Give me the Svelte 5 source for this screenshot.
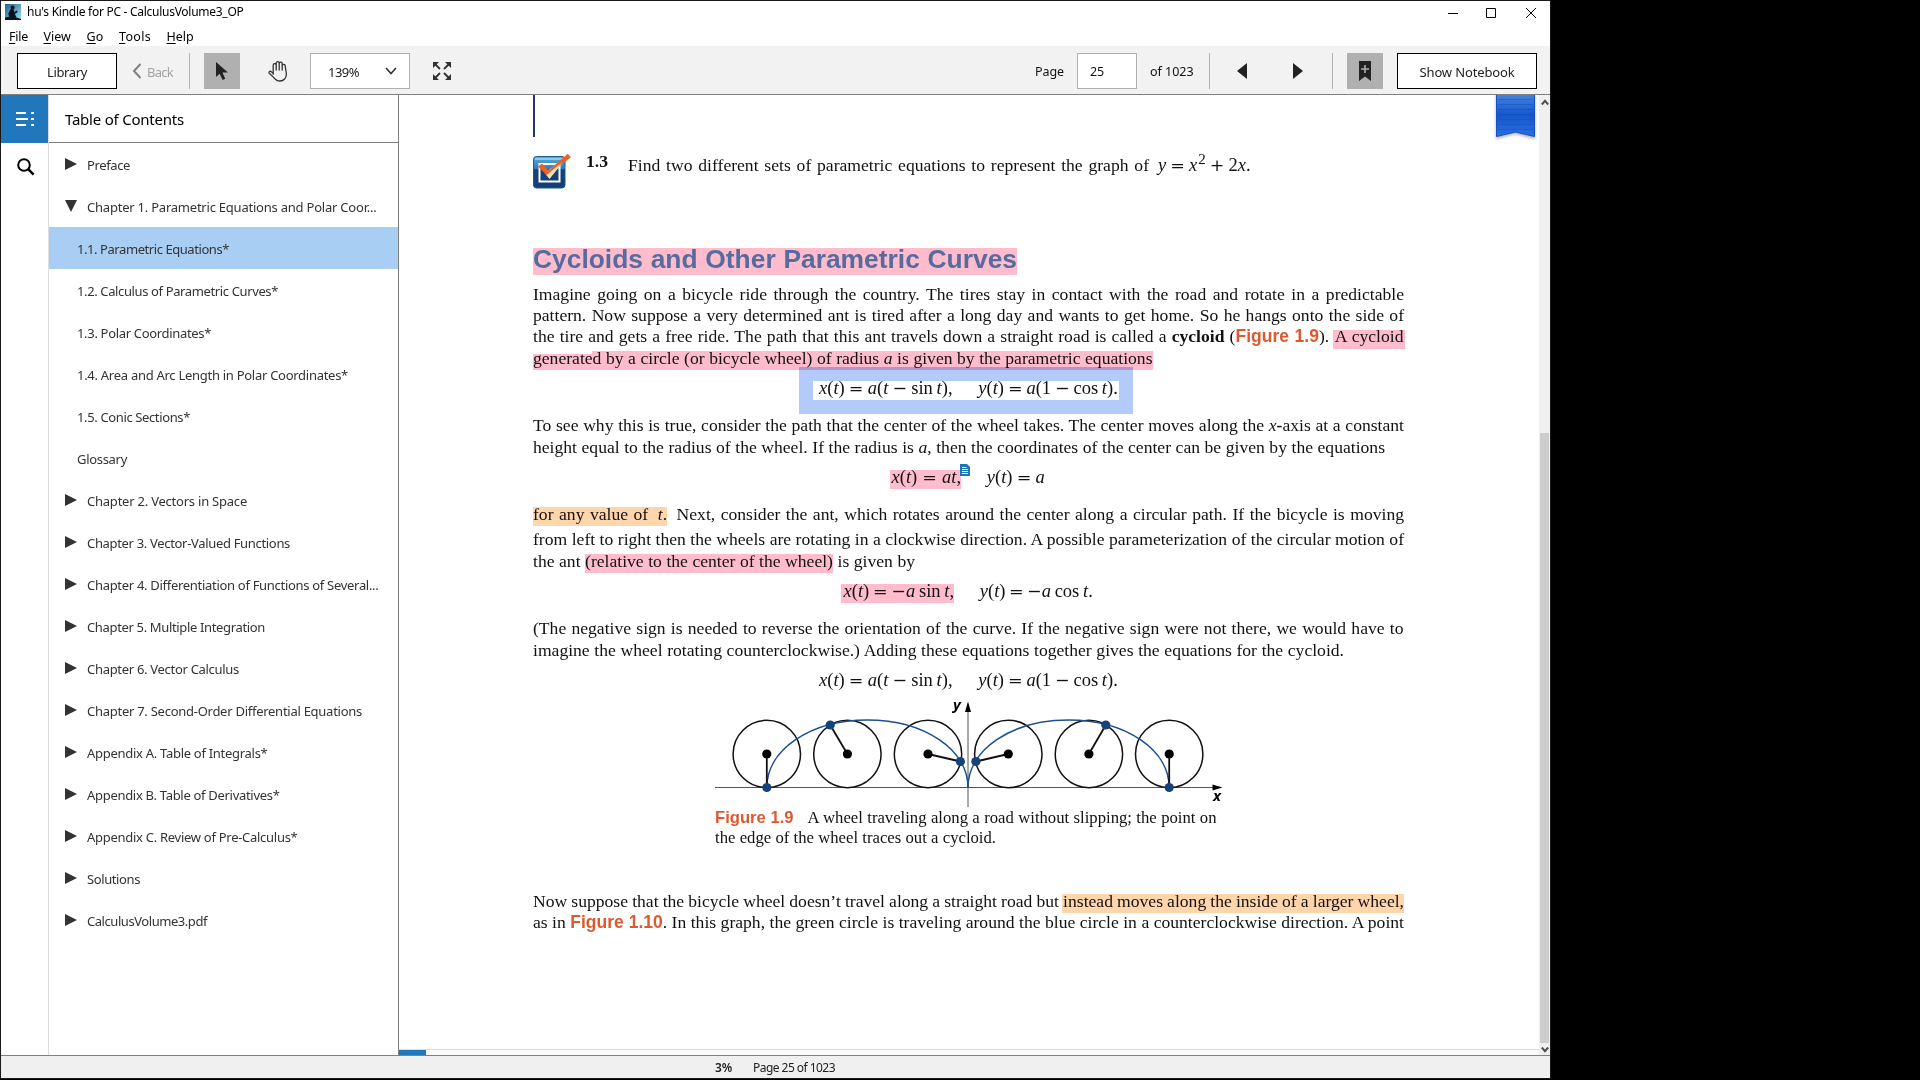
<script>
  const toc = [
    { t: 'Preface', w: 43, k: 'shut' },
    { t: 'Chapter 1. Parametric Equations and Polar Coor...', w: 289.5, k: 'open' },
    { t: '1.1. Parametric Equations*', w: 152, k: 'leaf', on: true },
    { t: '1.2. Calculus of Parametric Curves*', w: 201, k: 'leaf' },
    { t: '1.3. Polar Coordinates*', w: 134, k: 'leaf' },
    { t: '1.4. Area and Arc Length in Polar Coordinates*', w: 271, k: 'leaf' },
    { t: '1.5. Conic Sections*', w: 113, k: 'leaf' },
    { t: 'Glossary', w: 50, k: 'leaf' },
    { t: 'Chapter 2. Vectors in Space', w: 160, k: 'shut' },
    { t: 'Chapter 3. Vector-Valued Functions', w: 203, k: 'shut' },
    { t: 'Chapter 4. Differentiation of Functions of Several...', w: 291.5, k: 'shut' },
    { t: 'Chapter 5. Multiple Integration', w: 178, k: 'shut' },
    { t: 'Chapter 6. Vector Calculus', w: 152, k: 'shut' },
    { t: 'Chapter 7. Second-Order Differential Equations', w: 275, k: 'shut' },
    { t: 'Appendix A. Table of Integrals*', w: 180.5, k: 'shut' },
    { t: 'Appendix B. Table of Derivatives*', w: 192.5, k: 'shut' },
    { t: 'Appendix C. Review of Pre-Calculus*', w: 210.5, k: 'shut' },
    { t: 'Solutions', w: 53, k: 'shut' },
    { t: 'CalculusVolume3.pdf', w: 120, k: 'shut' }
  ];
  const menus = [
    { t: 'File', w: 19 },
    { t: 'View', w: 27.5 },
    { t: 'Go', w: 17 },
    { t: 'Tools', w: 32 },
    { t: 'Help', w: 27 }
  ];

  // Spreads a label evenly over a set width by letter spacing.
  function track(node, w) {
    const n = node.textContent.trim().length;
    node.style.letterSpacing = (w - node.getBoundingClientRect().width) / n + 'px';
  }

  // Justifies a single line over a set width by word spacing.
  function justify(node, w) {
    const text = node.textContent.replace(/[ \n\t]+/g, ' ').trim();
    const n = text.split(' ').length - 1;
    node.style.wordSpacing = (w - node.getBoundingClientRect().width) / n + 'px';
  }

  // Cycloid figure: wheel radius, hub height and wheel positions.
  const R = 34;
  const hub = 54;
  const wheels = [
    { x: 51.8, px: 51.8, py: 87.5 },
    { x: 132.4, px: 115.2, py: 25 },
    { x: 213, px: 245.4, py: 61.5 },
    { x: 293.3, px: 260.9, py: 61.5 },
    { x: 373.9, px: 390.8, py: 25 },
    { x: 454.2, px: 454.2, py: 87.5 }
  ];
  const arch = (x) =>
    `M${x} 87.5C${x} 50 ${x + 43.2} 20 ${x + 100.6} 20S${x + 201.2} 50 ${x + 201.2} 87.5`;
</script>

{#snippet op(c)}<span class="op">{c}</span>{/snippet}

<div class="window">
  <header class="titlebar">
    <svg class="app" width="16" height="16" viewBox="0 0 16 16">
      <defs><linearGradient id="sky" x1="0" y1="0" x2="1" y2="1"><stop offset="0" stop-color="#1d5f86" /><stop offset="1" stop-color="#9fe0f5" /></linearGradient></defs>
      <rect width="16" height="16" fill="url(#sky)" />
      <path d="M0 13.5 Q8 11.5 16 15 V16 H0Z" fill="#06121c" />
      <circle cx="7.6" cy="3.4" r="2" fill="#06121c" />
      <path d="M5.6 5 L8.8 5.6 L9.2 8 L12 6.4 L12.6 8 L9.8 10 L11.6 13.6 H4 L3.4 9.4Z" fill="#06121c" />
    </svg>
    <span class="title"><span class="fit" use:track={216.5}>hu's Kindle for PC - CalculusVolume3_OP</span></span>
    <svg class="wctl" width="90" height="12" viewBox="0 0 90 12" fill="none" stroke="#000">
      <path d="M0 6.5H10M38.5 1.5H47.5V10.5H38.5ZM78 1L88 11M88 1L78 11" />
    </svg>
  </header>
  <nav class="menubar">
    {#each menus as m}
      <span class="fit" use:track={m.w}><u>{m.t[0]}</u>{m.t.slice(1)}</span>
    {/each}
  </nav>

  <div class="toolbar">
    <button class="btn lib"><span class="fit" use:track={40}>Library</span></button>
    <div class="back">
      <svg width="10" height="16" viewBox="0 0 10 16" fill="none" stroke="#808080" stroke-width="2"><path d="M8.5 1L2 8L8.5 15" /></svg>
      <span class="fit" use:track={26}>Back</span>
    </div>
    <i class="sep s1"></i>
    <div class="tool sel">
      <svg width="12" height="19" viewBox="0 0 12 19"><path d="M0 0V15L3.6 11.8L6.6 18L9.2 16.8L6.4 10.6H12Z" fill="#222" /></svg>
    </div>
    <svg class="hand" width="20" height="21" viewBox="0 0 20 21" fill="none" stroke="#333" stroke-width="1.3" stroke-linejoin="round" stroke-linecap="round">
      <path d="M5.2 13.2V4.2a1.5 1.5 0 0 1 3-.2V9M8.2 9V2.2a1.5 1.5 0 0 1 3 0V9M11.2 9V2.6a1.5 1.5 0 0 1 3 0V9M14.2 9V4.8a1.5 1.5 0 0 1 3 0L18.4 13c0 4-2.6 7-6.4 7-3.4 0-4.8-1.4-6.2-3.4L1.2 12.2c-.8-1.6 1-2.4 2-1.6l2 2" />
    </svg>
    <div class="zoom">
      <span class="fit" use:track={31}>139%</span>
      <svg width="12" height="8" viewBox="0 0 12 8" fill="none" stroke="#333" stroke-width="1.6"><path d="M1 1L6 6.5L11 1" /></svg>
    </div>
    <svg class="full" width="18" height="18" viewBox="0 0 18 18">
      <path d="M0 0H6L0 6ZM18 0V6L12 0ZM0 18V12L6 18ZM18 18H12L18 12Z" fill="#333" />
      <path d="M1 1L7 7M17 1L11 7M1 17L7 11M17 17L11 11" stroke="#333" stroke-width="1.8" />
    </svg>
    <div class="right">
      <span class="pg"><span class="fit" use:track={29}>Page</span></span>
      <div class="pgin"><span class="fit" use:track={14}>25</span></div>
      <span class="of"><span class="fit" use:track={43.5}>of 1023</span></span>
      <i class="sep"></i>
      <svg class="prev" width="10" height="16" viewBox="0 0 10 16"><path d="M10 0V16L0 8Z" fill="#222" /></svg>
      <svg class="next" width="10" height="16" viewBox="0 0 10 16"><path d="M0 0V16L10 8Z" fill="#222" /></svg>
      <i class="sep s3"></i>
      <div class="tool mark-btn">
        <svg width="12" height="20" viewBox="0 0 12 20"><path d="M0 0H12V20L6 15.5L0 20Z" fill="#222" /><path d="M6 4V12M2 8H10" stroke="#b0b0b0" stroke-width="1.6" /></svg>
      </div>
      <button class="btn note"><span class="fit" use:track={95}>Show Notebook</span></button>
    </div>
  </div>

  <div class="body">
    <aside class="rail">
      <div class="rail-on">
        <svg width="18" height="14" viewBox="0 0 18 14" fill="#fff"><path d="M0 0H10V2H0ZM15 0H18V2H15ZM0 6H12V8H0ZM15 6H18V8H15ZM0 12H10V14H0ZM15 12H18V14H15Z" /></svg>
      </div>
      <svg class="find" width="18" height="18" viewBox="0 0 18 18" fill="none" stroke="#000"><circle cx="7" cy="7" r="5.8" stroke-width="2" /><path d="M11.2 11.2L16.6 16.6" stroke-width="2.4" /></svg>
    </aside>
    <section class="toc">
      <h2><span class="fit" use:track={119}>Table of Contents</span></h2>
      {#each toc as r}
        <div class="row {r.k}" class:on={r.on}>
          {#if r.k === 'shut'}
            <svg width="12" height="12" viewBox="0 0 12 12"><path d="M0 0L12 6L0 12Z" fill="#333" /></svg>
          {:else if r.k === 'open'}
            <svg width="12" height="12" viewBox="0 0 12 12"><path d="M0 0H12L6 12Z" fill="#333" /></svg>
          {/if}
          <span class="fit" use:track={r.w}>{r.t}</span>
        </div>
      {/each}
    </section>

    <main class="reader">
      <article class="page">
        <div class="rule"></div>
        <div class="exercise">
          <svg width="39" height="36" viewBox="0 0 39 36">
            <defs><linearGradient id="box" x1="0" y1="0" x2="0" y2="1"><stop offset="0" stop-color="#5aaede" /><stop offset=".38" stop-color="#2c7fbd" /><stop offset=".42" stop-color="#15437c" /><stop offset="1" stop-color="#123e74" /></linearGradient></defs>
            <rect x=".5" y="3.5" width="31.5" height="31.5" rx="3" fill="url(#box)" stroke="#1d5a97" />
            <path d="M2 6H30" stroke="#a5d5ee" stroke-width="1.5" />
            <rect x="6.5" y="11" width="20" height="17.5" fill="none" stroke="#fff" stroke-width="2" />
            <path d="M16.5 25.5L30.5 9V6L15.5 17L12 20.5Z" fill="#f3dfba" />
            <path d="M5 13.5L9 10.5L15.5 17.5L34.8 .8L38 4.2L24.5 14.5L14 22.5Z" fill="#ec6127" />
            <path d="M16.5 26L13.5 22L29 9.5Z" fill="#f3dfba" />
          </svg>
          <b>1.3</b>
          <span class="task"><span class="fit" use:justify={521}>Find two different sets of parametric equations to represent the graph of</span></span>
          <span class="math"><span class="fit" use:justify={92.5}><em>y</em> {@render op('=')} <em>x</em><sup>2</sup> {@render op('+')} 2<em>x</em>.</span></span>
        </div>
        <h1><mark class="pink"><span class="fit" use:justify={484}>Cycloids and Other Parametric Curves</span></mark></h1>
        <div class="line"><span class="fit" use:justify={871}>Imagine going on a bicycle ride through the country. The tires stay in contact with the road and rotate in a predictable</span></div>
        <div class="line"><span class="fit" use:justify={871}>pattern. Now suppose a very determined ant is tired after a long day and wants to get home. So he hangs onto the side of</span></div>
        <div class="line"><span class="fit" use:justify={871.5}>the tire and gets a free ride. The path that this ant travels down a straight road is called a <b>cycloid</b> (<a>Figure 1.9</a>). <mark class="lead">A cycloid</mark></span></div>
        <div class="line"><mark class="pink notch"><span class="fit" use:justify={619.5}>generated by a circle (or bicycle wheel) of radius <em>a</em> is given by the parametric equations</span></mark></div>
        <div class="line math e1">
          <span class="fit" use:justify={133.5}><em>x</em>(<em>t</em>) {@render op('=')} <em>a</em>(<em>t</em> {@render op('−')} sin&thinsp;<em>t</em>),</span>
          <span class="fit" use:justify={139.5}><em>y</em>(<em>t</em>) {@render op('=')} <em>a</em>(1 {@render op('−')} cos&thinsp;<em>t</em>).</span>
          <div class="select"></div>
        </div>
        <div class="line"><span class="fit" use:justify={871}>To see why this is true, consider the path that the center of the wheel takes. The center moves along the <em>x</em><b>-</b>axis at a constant</span></div>
        <div class="line"><span class="fit" use:justify={852}>height equal to the radius of the wheel. If the radius is <em>a</em>, then the coordinates of the center can be given by the equations</span></div>
        <div class="line math e2">
          <mark class="pink"><span class="fit" use:justify={69.5}><em>x</em>(<em>t</em>) {@render op('=')} <em>at</em>,</span></mark>
          <span class="fit" use:justify={58}><em>y</em>(<em>t</em>) {@render op('=')} <em>a</em></span>
          <svg class="memo" width="10" height="12" viewBox="0 0 10 12"><path d="M0 0H7L10 3V12H0Z" fill="#1b75bb" /><path d="M2 3.5H6.5M2 5.5H8M2 7.5H8M2 9.5H8" stroke="#fff" /></svg>
        </div>
        <div class="line"><span class="fit" use:justify={871}><mark class="orange">for any value of <em class="var">t</em>.</mark> <span class="after">Next,</span> consider the ant, which rotates around the center along a circular path. If the bicycle is moving</span></div>
        <div class="line"><span class="fit" use:justify={871}>from left to right then the wheels are rotating in a clockwise direction. A possible parameterization of the circular motion of</span></div>
        <div class="line"><span class="fit" use:justify={382}>the ant <mark class="pink">(relative to the center of the wheel)</mark> is given by</span></div>
        <div class="line math e3">
          <mark class="pink"><span class="fit" use:justify={110.5}><em>x</em>(<em>t</em>) {@render op('=')} {@render op('−')}<em>a</em>&thinsp;sin&thinsp;<em>t</em>,</span></mark>
          <span class="fit" use:justify={113}><em>y</em>(<em>t</em>) {@render op('=')} {@render op('−')}<em>a</em>&thinsp;cos&thinsp;<em>t</em>.</span>
        </div>
        <div class="line"><span class="fit" use:justify={870.5}>(The negative sign is needed to reverse the orientation of the curve. If the negative sign were not there, we would have to</span></div>
        <div class="line"><span class="fit" use:justify={811}>imagine the wheel rotating counterclockwise.) Adding these equations together gives the equations for the cycloid.</span></div>
        <div class="line math e1">
          <span class="fit" use:justify={133.5}><em>x</em>(<em>t</em>) {@render op('=')} <em>a</em>(<em>t</em> {@render op('−')} sin&thinsp;<em>t</em>),</span>
          <span class="fit" use:justify={139.5}><em>y</em>(<em>t</em>) {@render op('=')} <em>a</em>(1 {@render op('−')} cos&thinsp;<em>t</em>).</span>
        </div>
        <svg class="figure" width="510" height="110" viewBox="0 0 510 110">
          <path d="M0 87.5H500M253 8V107" stroke="#555" fill="none" />
          <path d="M507.5 87.5L497.5 84.5V90.5ZM253 1.5L250 12H256Z" fill="#000" />
          {#each wheels as w}
            <circle cx={w.x} cy={hub} r={R - 0.3} fill="none" stroke="#111" stroke-width="1.5" />
          {/each}
          <path d={arch(51.8)} fill="none" stroke="#1d4f8b" stroke-width="1.6" />
          <path d={arch(253)} fill="none" stroke="#1d4f8b" stroke-width="1.6" />
          {#each wheels as w}
            <path d="M{w.x} {hub}L{w.px} {w.py}" stroke="#111" stroke-width="1.8" />
            <circle cx={w.x} cy={hub} r="4.6" fill="#000" />
            <circle cx={w.px} cy={w.py} r="4.6" fill="#15437a" />
          {/each}
          <text x="238" y="10">y</text>
          <text x="498" y="101">x</text>
        </svg>
        <div class="line cap"><a><span class="fit" use:track={78.5}>Figure 1.9</span></a><span class="fit" use:justify={409}>A wheel traveling along a road without slipping; the point on</span></div>
        <div class="line cap"><span class="fit" use:justify={281}>the edge of the wheel traces out a cycloid.</span></div>
        <div class="line"><span class="fit" use:justify={871}>Now suppose that the bicycle wheel doesn’t travel along a straight road but <mark class="orange wide">instead moves along the inside of a larger wheel,</mark></span></div>
        <div class="line"><span class="fit" use:justify={871}>as in <a>Figure 1.10</a>. In this graph, the green circle is traveling around the blue circle in a counterclockwise direction. A point</span></div>
      </article>
      <svg class="ribbon" width="48" height="50" viewBox="0 0 48 50">
        <defs>
          <linearGradient id="rib" x1="0" y1="0" x2="0" y2="1"><stop offset="0" stop-color="#4a86e0" /><stop offset=".5" stop-color="#1457cc" /><stop offset="1" stop-color="#2a6ee0" /></linearGradient>
          <filter id="soft"><feGaussianBlur stdDeviation="1.6" /></filter>
        </defs>
        <path d="M5 -4H44V44L24.5 39L5 44Z" fill="#777" opacity=".6" filter="url(#soft)" />
        <path d="M5.5 -2H43.5V41.5L24.5 37L5.5 41.5Z" fill="url(#rib)" stroke="#1450bd" />
        <path d="M7 4.5H42M7 9.5H42M7 14.5H42M7 19.5H42M7 24.5H42M7 29.5H42M7 34.5H42" stroke="#0d47b0" opacity=".35" />
      </svg>
      <div class="progress"><i></i></div>
    </main>
    <div class="scroll">
      <svg width="8" height="7" viewBox="0 0 8 7" fill="none" stroke="#505050" stroke-width="2"><path d="M.8 5.5L4 1.8L7.2 5.5" /></svg>
      <div class="thumb"></div>
      <svg width="8" height="7" viewBox="0 0 8 7" fill="none" stroke="#505050" stroke-width="2"><path d="M.8 1.5L4 5.2L7.2 1.5" /></svg>
    </div>
  </div>
  <footer>
    <b class="fit" use:track={17}>3%</b>
    <span class="fit" use:track={82}>Page 25 of 1023</span>
  </footer>
</div>

<style>
  :global(body) { margin: 0; background: #000; overflow: hidden; }
  .window {
    box-sizing: border-box; width: 1551px; height: 1079px; border: 1px solid #1a1a1a;
    background: #fff; color: #000; display: flex; flex-direction: column;
    font-family: "Noto Sans", "Open Sans", sans-serif; font-size: 13px;
  }
  .fit { display: inline-block; white-space: nowrap; }
  svg { display: block; flex: none; }

  .titlebar { height: 23px; display: flex; align-items: center; padding: 0 12px 0 4px; font-size: 12px; }
  .app { margin-top: -1px; }
  .title { margin-left: 6px; line-height: 18px; margin-top: -1px; }
  .wctl { margin-left: auto; margin-top: 1px; }
  .menubar { height: 22px; display: flex; gap: 15.5px; padding-left: 8px; line-height: 26px; font-size: 12.5px; }
  u { text-underline-offset: 2px; }

  .toolbar {
    height: 46px; padding-top: 2px; background: #f2f2f2; border-bottom: 1px solid #808080; display: flex;
    align-items: center; padding-left: 16px; color: #222;
  }
  .btn {
    box-sizing: border-box; height: 36px; padding: 0; border: 1px solid #000; background: #fff;
    font: inherit; color: #222; line-height: 36px; text-align: center;
  }
  .lib { width: 100px; }
  .back { display: flex; align-items: center; gap: 5px; margin-left: 15px; width: 57px; color: #a3a3a3; }
  .back .fit, .zoom .fit { margin-top: 2px; }
  .sep { width: 1px; height: 36px; background: #b3b3b3; }
  .tool { width: 36px; height: 36px; background: #b0b0b0; display: flex; align-items: center; justify-content: center; }
  .sel { margin-left: 14px; }
  .hand { margin-left: 28px; }
  .zoom {
    box-sizing: border-box; width: 100px; height: 36px; margin-left: 22px; border: 1px solid #b0b0b0; background: #fff;
    display: flex; align-items: center; justify-content: space-between; padding: 0 12px 0 17px;
  }
  .full { margin-left: 23px; }
  .right { margin-left: auto; display: flex; align-items: center; padding-right: 13px; color: #111; font-size: 12.5px; }
  .pg { width: 42px; }
  .pgin { box-sizing: border-box; width: 60px; height: 36px; border: 1px solid #b0b0b0; background: #fff; padding-left: 12px; line-height: 36px; }
  .of { width: 72px; padding-left: 13px; box-sizing: border-box; }
  .prev { margin-left: 27px; }
  .next { margin-left: 46px; }
  .s3 { margin-left: 29px; }
  .mark-btn { margin-left: 14px; }
  .note { width: 140px; margin-left: 14px; font-size: 13px; }

  .body { flex: 1; display: flex; min-height: 0; }
  .rail { box-sizing: border-box; width: 48px; border-right: 1px solid #dcdcdc; }
  .rail-on { height: 48px; background: #2077bb; display: flex; align-items: center; justify-content: center; }
  .find { margin: 15px 0 0 15.5px; }
  .toc { box-sizing: border-box; width: 350px; border-right: 1px solid #808080; color: #333; }
  h2 {
    box-sizing: border-box; height: 48px; margin: 0; padding-left: 16px; border-bottom: 1px solid #808080;
    font-size: 15px; font-weight: 400; line-height: 49px; color: #000;
  }
  .row { height: 42px; display: flex; align-items: center; gap: 10px; padding-left: 16px; line-height: 20px; }
  .row svg { margin-top: -1px; }
  .row .fit { margin-top: 2px; }
  .row.leaf { padding-left: 28px; }
  .on { background: #a9cef4; }

  .reader { flex: 1; position: relative; display: flex; flex-direction: column; }
  .page {
    flex: 1; min-height: 0; padding-left: 134px; display: grid; align-items: start; justify-items: start; color: #111;
    grid-template-rows: 60px 93px 39px 21px 21px 22px 30px 37px 22px 30px 37px 25px 22px 30px 37px 22px 30px 27px 111px 20px 63px 21px 134px;
    font-family: "Liberation Serif", "Times New Roman", serif; font-size: 17.6px;
  }
  .rule { width: 2px; height: 42px; background: #1f3864; }
  .line, .exercise { line-height: 14px; white-space: nowrap; }
  .exercise { display: flex; align-items: flex-start; }
  .exercise > svg { margin-top: -2px; }
  .exercise b { width: 42px; margin: -1px 0 0 14px; }
  .task { margin-top: 3px; }
  .exercise .math { margin: 3px 0 0 9px; }
  sup { font-size: 15px; line-height: 0; vertical-align: 7px; margin-left: 1px; }
  .op { font-family: "DejaVu Serif", serif; font-size: 17.5px; line-height: 0; }
  h1 { margin: 0; font: bold 26.4px/27px "Liberation Sans", Arial, sans-serif; }
  h1 mark.pink { display: block; width: 484px; height: 27px; line-height: 22px; color: #566c9f; }
  mark { display: inline-block; height: 19px; line-height: 14px; color: inherit; background: none; vertical-align: baseline; }
  .pink { background: #ffbccd; }
  .orange { background: #ffd5ab; }
  .wide { margin-left: -1px; padding-left: 1px; }
  .lead { height: 20px; margin-left: -1px; padding: 0 1px 0 1.5px; background: linear-gradient(#ffbccd, #ffbccd) 0 1px no-repeat; }
  .notch { width: 620px; background: linear-gradient(#fff, #fff) 0 0 / 59px 3px no-repeat #ffbccd; }
  a { color: #dc5a2f; font: bold 17.5px/14px "Liberation Sans", Arial, sans-serif; }
  .var { margin-left: 4px; }
  .after { margin-left: 4px; }
  .math { font-size: 18.5px; display: flex; }
  .math.line { position: relative; }
  .math mark { display: block; }
  .e1 { padding-left: 286px; gap: 25.8px; }
  .e2 { padding-left: 357px; gap: 25.8px; }
  .e2 mark { padding-left: 1.5px; }
  .e3 { padding-left: 308px; gap: 25.8px; }
  .e3 mark { padding-left: 2.5px; }
  .select {
    position: absolute; left: 266px; top: -14px; width: 306px; height: 19px;
    border: 14px solid #b2cbfb; mix-blend-mode: multiply;
  }
  .memo { position: absolute; left: 427px; top: -6px; }
  .figure { margin-left: 182px; overflow: visible; }
  .figure text { font: italic bold 15px "Open Sans", sans-serif; fill: #000; }
  .cap { margin-left: 182px; font-size: 16.68px; }
  .cap a { font-size: 16.6px; margin-right: 14px; }
  .ribbon { position: absolute; right: 0; top: 0; overflow: hidden; }
  .progress { height: 5px; border-top: 1px solid #dcdcdc; background: #fbfbfb; }
  .progress i { display: block; width: 27px; height: 5px; background: #2077bb; }
  .scroll { width: 11px; background: #f0f0f0; display: flex; flex-direction: column; align-items: center; padding: 4px 0 2px; box-sizing: border-box; }
  .thumb { width: 9px; height: 610px; margin: auto 0 3px; background: #cdcdcd; }
  footer {
    height: 22px; border-top: 1px solid #808080; background: #f0f0f0; display: flex; align-items: center;
    gap: 21px; padding-left: 714px; font-size: 12px; color: #222;
  }
  footer b { font-weight: 600; }
</style>
